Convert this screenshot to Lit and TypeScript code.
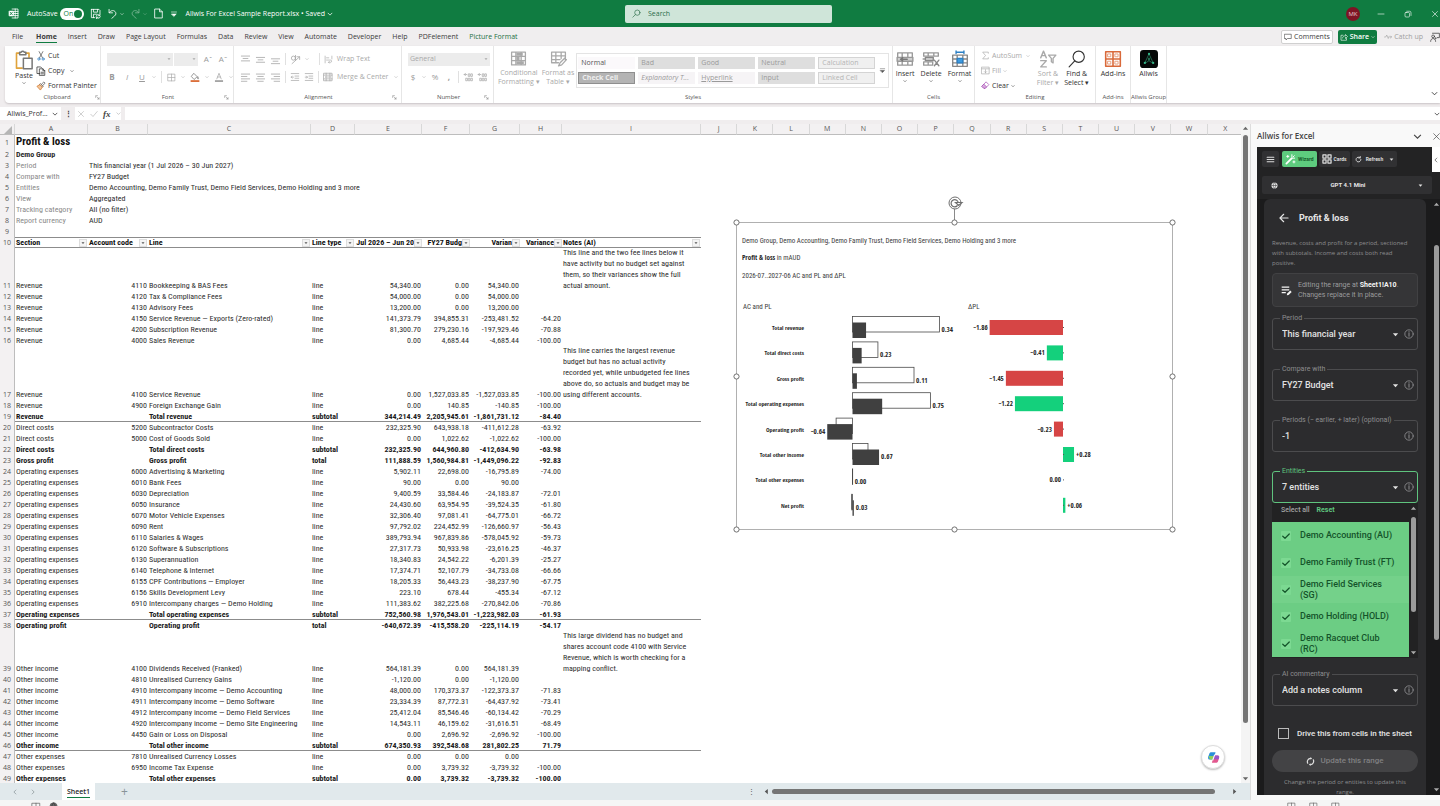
import { LitElement, html, css, svg, nothing } from "lit";
import { customElement, state } from "lit/decorators.js";
import { classMap } from "lit/directives/class-map.js";

const stroke = (body: unknown, size = 12) => html`<svg class="ic" width=${size} height=${size} viewBox="0 0 16 16" fill="none" stroke="currentColor" stroke-width="1.2" stroke-linecap="round" stroke-linejoin="round" aria-hidden="true">${body}</svg>`;
const caret = (size = 5) => html`<svg class="ic" width=${size} height=${size} viewBox="0 0 8 8" aria-hidden="true"><path d="M1 2.5h6L4 6z" fill="currentColor"/></svg>`;
const chev = (size = 6) => html`<svg class="ic" width=${size} height=${size} viewBox="0 0 8 8" fill="none" stroke="currentColor" stroke-width="1" aria-hidden="true"><path d="M1 2.5l3 3 3-3"/></svg>`;

const I = {
  excel: svg`<path d="M6 1.500h8.500v13H6M6 5h8.500M6 8h8.500M6 11h8.500M10.500 1.500v13" /><rect x="1" y="4" width="7.500" height="8" fill="#fff" stroke="none" rx="1"/><path d="M3 6l3.500 4M6.500 6L3 10" stroke="#107c41"/>`,
  save: svg`<path d="M2 2h11l1.500 1.500V8M2 2v12h5M5 2v4h6V2M5 14V9h5"/><path d="M9 12a3 3 0 0 1 5-1.500M14.500 9v2h-2M15 12.500a3 3 0 0 1-5 1.500M9.500 15.500v-2h2"/>`,
  undo: svg`<path d="M3 2v5h5M3.200 6.800C5 4 9 2.500 11.500 5s1.500 5-.5 6.500L7 15"/>`,
  redo: svg`<path d="M13 2v5H8M12.800 6.800C11 4 7 2.500 4.500 5s-1.500 5 .5 6.500L9 15"/>`,
  doc: svg`<path d="M3 1.500h6.500l4 4v9H3zM9.500 1.500v4h4"/>`,
  custom: svg`<path d="M3 4h10"/><path d="M3.500 8h9L8 12.500z" fill="currentColor"/>`,
  search: svg`<circle cx="9.500" cy="6.500" r="4.700"/><path d="M6 10l-4.500 4.500"/>`,
  paste: svg`<path d="M4.500 2.500H2v12h4.500M9.500 2.500H12V6" stroke="#e0a33c" stroke-width="1.300"/><path d="M4.500 3.800h5V1.800H8.200a1.300 1.300 0 0 0-2.400 0H4.500z" stroke="#777"/><path d="M7.500 6.500h7v8.500h-7z" fill="#fff" stroke="#777"/>`,
  cut: svg`<path d="M5 1l5.500 10M11 1L5.500 11" stroke="#555"/><circle cx="4.600" cy="12.800" r="1.800" stroke="#2f7fc4"/><circle cx="11.400" cy="12.800" r="1.800" stroke="#2f7fc4"/>`,
  copy: svg`<path d="M6 12H1.500V1.500h6L9 3"/><path d="M6 4.500h5l3 3V15H6zM11 4.500v3h3M8 10h4M8 12.500h4"/>`,
  painter: svg`<path d="M9 5l3.500-3.500 2 2L11 7" stroke="#555"/><path d="M7.500 4.500l4 4L10 10 6 6z" stroke="#555"/><path d="M6 6L1.500 8.500 7 14.500l3-4.500z" stroke="#d4772a" fill="#f3c79b"/>`,
  border: svg`<path d="M2 2h12v12H2zM8 2v12M2 8h12"/>`,
  fill: svg`<path d="M6.500 2.500l5 5-5 4.500-4-4.500zM12.500 8c1.500 2 1.500 3 .5 3s-1.500-1-.5-3" stroke="#777"/><path d="M1 14.500h14" stroke="#d65b1f" stroke-width="2.600" stroke-linecap="butt"/>`,
  color: svg`<path d="M4.500 11L8 2l3.500 9M5.700 8h4.600"/><path d="M1.500 14.500h13" stroke="#999" stroke-width="2.600" stroke-linecap="butt"/>`,
  alTop: svg`<path d="M2 3h12M4.500 6.500h7M2 10h12"/>`,
  alMid: svg`<path d="M2 5h12M4.500 8.500h7M2 12h12"/>`,
  alBot: svg`<path d="M2 7h12M4.500 10.500h7M2 14h12"/>`,
  alL: svg`<path d="M2 3h12M2 6.500h8M2 10h12M2 13.500h8"/>`,
  alC: svg`<path d="M2 3h12M4 6.500h8M2 10h12M4 13.500h8"/>`,
  alR: svg`<path d="M2 3h12M6 6.500h8M2 10h12M6 13.500h8"/>`,
  orient: svg`<circle cx="5" cy="6" r="3"/><path d="M8 2v7M3 14L14 4M14 8V4h-4"/>`,
  indL: svg`<path d="M2 2.500h12M8 6.500h6M8 10h6M2 13.500h12M5.500 8.200H2M3.500 6.500L2 8.200l1.500 1.700"/>`,
  indR: svg`<path d="M2 2.500h12M8 6.500h6M8 10h6M2 13.500h12M2 8.200h3.500M4 6.500l1.500 1.700L4 9.900"/>`,
  wrap: svg`<path d="M2 2v12M14 2v5M4.500 5h4M4.500 9h7a2 2 0 0 1 0 4H8M9.500 11.500L8 13l1.500 1.500"/>`,
  merge: svg`<path d="M1.500 2h13v12h-13zM1.500 5h13M1.500 11h13M5 2v3M11 2v3M5 11v3M11 11v3M4 8h8M5.500 6.800L4 8l1.500 1.200M10.500 6.800L12 8l-1.500 1.200"/>`,
  launch: svg`<path d="M2 8V2h6M6 6l7 7M13 8v5H8"/>`,
  dec: svg`<path d="M2 4h4M4 2L2 4l2 2M9 3h2v4H9zM13 3h2v4h-2zM5 10h2v4H5zM9 10h2v4H9zM13 10h2v4h-2z"/>`,
  cond: svg`<path d="M1.500 2h13v12h-13zM1.500 6h13M1.500 10h13M5.500 2v12M10.500 2v12"/><path d="M6 2.500h6v3H6zM6 6.500h3v3H6zM6 10.500h7v3H6z" fill="currentColor" stroke="none"/>`,
  ftable: svg`<path d="M1.500 2h13v8M1.500 2v10H8M1.500 5.500h13M1.500 9h8M5.500 2v10M10.500 2v6M14.500 7l-5 5-1.500 3 3-1 4.500-5"/>`,
  insert: svg`<path d="M1.500 2.500h13v11h-13zM5.500 2.500v11M10.500 2.500v11" stroke="#999"/><path d="M1 6.500h14v3.500H1z" fill="#d0d0d0" stroke="#999"/><path d="M4 8.200h6M6 6.800L4 8.200l2 1.500" stroke="#777"/>`,
  del: svg`<path d="M1.500 2.500h13v3h-13zM1.500 10.500h8v3h-8zM5.500 2.500v3M10.500 2.500v3M5.500 10.500v3M1 8h6" stroke="#999"/><path d="M11 9l4 5M15 9l-4 5" stroke="#888"/><path d="M3 6.500h7v3H3z" fill="#c9c9c9" stroke="#888"/>`,
  format: svg`<path d="M1.500 4.500h13v10h-13zM1.500 8h13M1.500 11.500h13M5.500 4.500v10M10.500 4.500v10" stroke="#888"/><path d="M5.500 7.500h5v4h-5z" fill="#3d9be0" stroke="#2b7fc4"/><path d="M4.500 2h7M4.500.8v2.400M11.500.8v2.400" stroke="#2b7fc4"/>`,
  sum: svg`<path d="M13 4V2H3l5 6-5 6h10v-2"/>`,
  fillDown: svg`<path d="M1.500 2h13v12h-13zM1.500 5h13M8 6.500V12M6 10l2 2 2-2"/>`,
  clear: svg`<path d="M9.500 2L14 6.500 7.500 13H5L2 10z" stroke="#a349b0"/><path d="M5.500 6l4.500 4.500L7.500 13H5L2 10z" stroke="#a349b0" fill="#d9a7df"/>`,
  sort: svg`<path d="M1.500 7L4 1l2.500 6M2.300 5h3.400M1.500 9.500h5l-5 5.500h5M8.500 4.500h6.500l-2.500 3v4l-1.500-1v-3z"/>`,
  find: svg`<circle cx="9.500" cy="6" r="5" stroke-width="1"/><path d="M6 9.700L1 15" stroke-width="1"/>`,
  addins: svg`<path d="M1.500 1.500h13v13h-13zM8 1.500v13M1.500 8h13" stroke="#d9693a" stroke-width="1.400"/><path d="M3.500 3.500h2.500v2.500H3.500zM10 3.500h2.500v2.500H10zM3.500 10h2.500v2.500H3.500zM10 10h2.500v2.500H10z" stroke="#e59a78" stroke-width=".8"/>`,
  allwis: svg`<rect width="16" height="16" rx="3" fill="#050807" stroke="none"/><path d="M8 3.500L4.500 11M8 3.500l3.500 7.500M8 7v2.500l-3 2M8 9.500l3 2" stroke="#2a8b68" stroke-width=".6"/><g fill="#35b98a" stroke="none"><circle cx="8" cy="3.500" r="1"/><circle cx="4.300" cy="11.500" r="1"/><circle cx="11.700" cy="11.500" r="1"/><circle cx="8" cy="8" r=".7"/></g>`,
  comment: svg`<path d="M1.500 2.500h13v8.500H7l-3 3v-3H1.500z"/>`,
  share: svg`<path d="M6 4.500H2v10h11V11M5 10c.5-3 3-4.500 6-4.500V3l4 4-4 4V8.500"/>`,
  catchUp: svg`<path d="M1 8h2.500L5.500 4l3 7L10 7l1 1h4M13 6l2 2-2 2"/>`,
  person: svg`<path d="M4 2h11v7h-4l-2.500 2.500V9"/><circle cx="5" cy="7" r="2.200"/><path d="M1 15c0-3 2-4.500 4-4.500S9 12 9 15"/>`,
  x: svg`<path d="M3 3l10 10M13 3L3 13"/>`,
  check: svg`<path d="M1.500 8.500L6 13 14.500 3"/>`,
  tick: svg`<path d="M1.500 8.500L6 12.500 14.500 4" stroke-width="2.400"/>`,
  restore: svg`<rect x="2" y="5" width="9" height="9" rx="2"/><path d="M5.500 2.500H11a3 3 0 0 1 3 3V11"/>`,
  min: svg`<path d="M2 8h12"/>`,
  menu: svg`<path d="M2 4h12M2 8h12M2 12h12" stroke-width="1.800"/>`,
  wand: svg`<path d="M2 14l8-8" stroke-width="2.600"/><path d="M10 1v3M14 6h-3M13.500 2.500L12 4M4 2v3M2.500 3.500h3M13 10v3M11.500 11.500h3" stroke-width="1.400"/>`,
  cards: svg`<path d="M1.500 1.500h5v5h-5zM9.500 1.500h5v5h-5zM1.500 9.500h5v5h-5zM9.500 9.500h5v5h-5z" stroke-width="2"/>`,
  refresh: svg`<path d="M13.500 8A5.500 5.500 0 1 1 11.500 3.800M12 1v3.500H8.500" stroke-width="2"/>`,
  globe: svg`<circle cx="8" cy="8" r="6.500" fill="currentColor"/><path d="M1.500 8h13M8 1.500c-4 4-4 9 0 13M8 1.500c4 4 4 9 0 13" stroke="#2f2f31"/>`,
  back: svg`<path d="M14.500 8h-13M7.500 2l-6 6 6 6" stroke-width="1.800"/>`,
  editNote: svg`<path d="M1 3h11M1 7h11M1 11h6" stroke-width="1.800" stroke-linecap="butt"/><path d="M8.500 15l.5-2.500L13.500 8l2 2-4.500 4.500z" fill="currentColor" stroke="none"/>`,
  info: svg`<circle cx="8" cy="8" r="6.700" stroke-width="1.400"/><path d="M8 7v4.500M8 4.300v.8" stroke-width="1.600"/>`,
  sync: svg`<path d="M3 11A6 6 0 0 1 8 2.500M13 5a6 6 0 0 1-5 8.500" stroke-width="2.200"/><path d="M8 0v5l2.800-2.500zM8 11v5l-2.800-2.500z" fill="currentColor" stroke="none"/>`,
};

type Row = { n: number; k?: "sub" | "tot"; rule?: boolean; note?: string; c: string[] };
const R = (n: number, text: string, opt: Partial<Row> = {}): Row => ({ n, c: text.split("|"), ...opt });
const rows: Row[] = [
  R(11, "Revenue|4110|Bookkeeping & BAS Fees|line|54,340.00|0.00|54,340.00|", { note: "This line and the two fee lines below it\nhave activity but no budget set against\nthem, so their variances show the full\nactual amount." }),
  R(12, "Revenue|4120|Tax & Compliance Fees|line|54,000.00|0.00|54,000.00|"),
  R(13, "Revenue|4130|Advisory Fees|line|13,200.00|0.00|13,200.00|"),
  R(14, "Revenue|4150|Service Revenue — Exports (Zero-rated)|line|141,373.79|394,855.31|-253,481.52|-64.20"),
  R(15, "Revenue|4200|Subscription Revenue|line|81,300.70|279,230.16|-197,929.46|-70.88"),
  R(16, "Revenue|4000|Sales Revenue|line|0.00|4,685.44|-4,685.44|-100.00"),
  R(17, "Revenue|4100|Service Revenue|line|0.00|1,527,033.85|-1,527,033.85|-100.00", { note: "This line carries the largest revenue\nbudget but has no actual activity\nrecorded yet, while unbudgeted fee lines\nabove do, so actuals and budget may be\nusing different accounts." }),
  R(18, "Revenue|4900|Foreign Exchange Gain|line|0.00|140.85|-140.85|-100.00"),
  R(19, "Revenue||Total revenue|subtotal|344,214.49|2,205,945.61|-1,861,731.12|-84.40", { k: "sub", rule: true }),
  R(20, "Direct costs|5200|Subcontractor Costs|line|232,325.90|643,938.18|-411,612.28|-63.92"),
  R(21, "Direct costs|5000|Cost of Goods Sold|line|0.00|1,022.62|-1,022.62|-100.00"),
  R(22, "Direct costs||Total direct costs|subtotal|232,325.90|644,960.80|-412,634.90|-63.98", { k: "sub" }),
  R(23, "Gross profit||Gross profit|total|111,888.59|1,560,984.81|-1,449,096.22|-92.83", { k: "tot" }),
  R(24, "Operating expenses|6000|Advertising & Marketing|line|5,902.11|22,698.00|-16,795.89|-74.00"),
  R(25, "Operating expenses|6010|Bank Fees|line|90.00|0.00|90.00|"),
  R(26, "Operating expenses|6030|Depreciation|line|9,400.59|33,584.46|-24,183.87|-72.01"),
  R(27, "Operating expenses|6050|Insurance|line|24,430.60|63,954.95|-39,524.35|-61.80"),
  R(28, "Operating expenses|6070|Motor Vehicle Expenses|line|32,306.40|97,081.41|-64,775.01|-66.72"),
  R(29, "Operating expenses|6090|Rent|line|97,792.02|224,452.99|-126,660.97|-56.43"),
  R(30, "Operating expenses|6110|Salaries & Wages|line|389,793.94|967,839.86|-578,045.92|-59.73"),
  R(31, "Operating expenses|6120|Software & Subscriptions|line|27,317.73|50,933.98|-23,616.25|-46.37"),
  R(32, "Operating expenses|6130|Superannuation|line|18,340.83|24,542.22|-6,201.39|-25.27"),
  R(33, "Operating expenses|6140|Telephone & Internet|line|17,374.71|52,107.79|-34,733.08|-66.66"),
  R(34, "Operating expenses|6155|CPF Contributions — Employer|line|18,205.33|56,443.23|-38,237.90|-67.75"),
  R(35, "Operating expenses|6156|Skills Development Levy|line|223.10|678.44|-455.34|-67.12"),
  R(36, "Operating expenses|6910|Intercompany charges — Demo Holding|line|111,383.62|382,225.68|-270,842.06|-70.86"),
  R(37, "Operating expenses||Total operating expenses|subtotal|752,560.98|1,976,543.01|-1,223,982.03|-61.93", { k: "sub", rule: true }),
  R(38, "Operating profit||Operating profit|total|-640,672.39|-415,558.20|-225,114.19|-54.17", { k: "tot" }),
  R(39, "Other income|4100|Dividends Received (Franked)|line|564,181.39|0.00|564,181.39|", { note: "This large dividend has no budget and\nshares account code 4100 with Service\nRevenue, which is worth checking for a\nmapping conflict." }),
  R(40, "Other income|4810|Unrealised Currency Gains|line|-1,120.00|0.00|-1,120.00|"),
  R(41, "Other income|4910|Intercompany income — Demo Accounting|line|48,000.00|170,373.37|-122,373.37|-71.83"),
  R(42, "Other income|4911|Intercompany income — Demo Software|line|23,334.39|87,772.31|-64,437.92|-73.41"),
  R(43, "Other income|4912|Intercompany income — Demo Field Services|line|25,412.04|85,546.46|-60,134.42|-70.29"),
  R(44, "Other income|4920|Intercompany income — Demo Site Engineering|line|14,543.11|46,159.62|-31,616.51|-68.49"),
  R(45, "Other income|4450|Gain or Loss on Disposal|line|0.00|2,696.92|-2,696.92|-100.00"),
  R(46, "Other income||Total other income|subtotal|674,350.93|392,548.68|281,802.25|71.79", { k: "sub", rule: true }),
  R(47, "Other expenses|7810|Unrealised Currency Losses|line|0.00|0.00|0.00|"),
  R(48, "Other expenses|6950|Income Tax Expense|line|0.00|3,739.32|-3,739.32|-100.00"),
  R(49, "Other expenses||Total other expenses|subtotal|0.00|3,739.32|-3,739.32|-100.00", { k: "sub" }),
];
const meta = [
  ["Period", "This financial year (1 Jul 2026 – 30 Jun 2027)"],
  ["Compare with", "FY27 Budget"],
  ["Entities", "Demo Accounting, Demo Family Trust, Demo Field Services, Demo Holding and 3 more"],
  ["View", "Aggregated"],
  ["Tracking category", "All (no filter)"],
  ["Report currency", "AUD"],
];
const heads = ["Section", "Account code", "Line", "Line type", "Jul 2026 – Jun 20", "FY27 Budg", "Varian", "Variance", "Notes (AI)"];
const letters = "ABCDEFGHIJKLMNOPQRSTUVWX".split("");

@customElement("pnl-chart")
class PnlChart extends LitElement {
  static styles = css`
    :host { display: block; }
    svg { display: block; overflow: visible; }
    text { font-family: "Roboto Condensed", "Liberation Sans Narrow", Roboto, sans-serif; fill: #3c3c3c; }
    .h { font-size: 7px; }
    .l { font-size: 7px; }
    .n { font-size: 6px; }
    .b { font-family: "Open Sans Condensed", "Roboto Condensed", "Open Sans", sans-serif; font-weight: 700; fill: #262626; }
    .e { text-anchor: end; }
  `;
  data: [string, number, number, number, string, string][] = [
    ["Total revenue", 0.344, 2.206, -1.862, "0.34", "bad"],
    ["Total direct costs", 0.232, 0.645, -0.41, "0.23", "good"],
    ["Gross profit", 0.112, 1.561, -1.45, "0.11", "bad"],
    ["Total operating expenses", 0.753, 1.977, -1.22, "0.75", "good"],
    ["Operating profit", -0.641, -0.416, -0.23, "−0.64", "bad"],
    ["Total other income", 0.674, 0.393, 0.28, "0.67", "good"],
    ["Total other expenses", 0, 0.004, 0, "0.00", "none"],
    ["Net profit", 0.034, -0.027, 0.06, "0.03", "good"],
  ];
  render() {
    const s = 39.4, ax = 116.5, vx = 327;
    return html`<svg width="436" height="307" viewBox="0 0 436 307" role="img" aria-label="Profit and loss chart">
      <text class="h" x="6" y="21">Demo Group, Demo Accounting, Demo Family Trust, Demo Field Services, Demo Holding and 3 more</text>
      <text class="h" x="6" y="38"><tspan class="b">Profit &amp; loss</tspan> in mAUD</text>
      <text class="h" x="6" y="56">2026-07..2027-06 AC and PL and ΔPL</text>
      <text class="l" x="7" y="87">AC and PL</text><text class="l" x="232" y="87">ΔPL</text>
      ${this.data.map(([name, ac, pl, v, t, tone], i) => {
        const y = 94 + i * 25.4;
        const x0 = Math.min(0, pl) * s, x1 = Math.min(0, ac) * s;
        const right = Math.max(0, ac, pl) * s;
        const vt = v === 0 ? "0.00" : (v < 0 ? "−" : "+") + Math.abs(v).toFixed(2);
        return svg`
          <text class="n b e" x="68" y=${y + 14}>${name}</text>
          <rect x=${ax + x0} y=${y + 0.5} width=${Math.abs(pl) * s} height="15.500" fill="#fff" stroke="#4a4a4a" stroke-width=".8"/>
          <rect x=${ax + x1} y=${y + 6.5} width=${Math.abs(ac) * s} height="15.500" fill="#404040"/>
          ${ac < 0 ? svg`<text class="l b e" x=${ax + x1 - 2} y=${y + 16}>${t}</text>` : svg`<text class="l b" x=${ax + right + 2} y=${y + 16}>${t}</text>`}
          <rect x=${v < 0 ? vx + v * s : vx} y=${y + 4} width=${Math.abs(v) * s} height="15" fill=${tone === "bad" ? "#d64545" : "#14d07c"}/>
          <path d=${`M${vx} ${y + 11.5}h1`} stroke="#555" />
          ${v > 0 ? svg`<text class="l b" x=${vx + v * s + 2} y=${y + 14}>${vt}</text>` : svg`<text class="l b e" x=${vx + v * s - 2} y=${y + 14}>${vt}</text>`}`;
      })}
      <rect x=".5" y=".5" width="436" height="307" fill="none" stroke="#b0b0b0" stroke-width="1"/>
      <path d="M218.500-14V0" stroke="#8a8a8a"/>
      <g fill="#fff" stroke="#707070">
        ${[[0, 0], [218, 0], [436, 0], [0, 154], [436, 154], [0, 307], [218, 307], [436, 307]].map(([x, y]) => svg`<circle cx=${x + 0.5} cy=${y + 0.5} r="2.600"/>`)}
        <circle cx="219" cy="-19" r="6"/>
        <path d="M221.500-16.500a3.600 3.600 0 1 1 .8-2.500M219.500-19.500h6.500l-3.300 3z" stroke-width="1.200"/>
      </g>
    </svg>`;
  }
}

@customElement("app-root")
class AppRoot extends LitElement {
  @state() private entities = [
    ["Demo Accounting (AU)", true], ["Demo Family Trust (FT)", true], ["Demo Field Services (SG)", true], ["Demo Holding (HOLD)", true], ["Demo Racquet Club (RC)", true],
  ] as [string, boolean][];

  static styles = css`
    :host { display: block; font-family: "Open Sans", "Noto Sans", sans-serif; font-size: 7px; line-height: 10px; color: #333; }
    * { box-sizing: border-box; }
    button, input, select { font: inherit; color: inherit; background: none; border: 0; padding: 0; margin: 0; appearance: none; border-radius: 0; text-align: inherit; }
    a { color: inherit; text-decoration: none; }
    .ic { display: block; flex: none; }
    .app { height: 100vh; display: flex; flex-direction: column; overflow: hidden; background: #f0edee; }
    .row { display: flex; align-items: center; }

    .title { flex: none; height: 27px; background: #107c41; color: #fff; display: grid; grid-template-columns: minmax(0, 625fr) 207px minmax(0, 608fr); align-items: center; }
    .title .left { display: flex; align-items: center; gap: 6px; padding-left: 8px; white-space: nowrap; }
    .title .left > .row { gap: 2px; }
    .toggle { width: 24px; height: 12px; border-radius: 6px; background: #fff; color: #107c41; display: flex; align-items: center; justify-content: space-between; padding: 0 2px 0 4px; margin-left: -4px; }
    .toggle i { width: 8px; height: 8px; border-radius: 50%; background: #107c41; }
    .auto { margin-left: 2px; }
    .fname { margin-left: 2px; }
    .dim { opacity: .45; }
    .search { height: 18px; background: #cfe5d9; color: #2c6e4b; display: flex; align-items: center; gap: 7px; padding: 0 7px; border-radius: 2px; }
    .search input { flex: 1; min-width: 0; }
    .search input::placeholder { color: #2c6e4b; opacity: 1; }
    .win { display: flex; justify-content: flex-end; align-items: center; gap: 19px; padding-right: 1px; }
    .avatar { width: 14px; height: 14px; border-radius: 50%; background: #7d1424; font-size: 6px; text-align: center; line-height: 14px; color: #e5c9cd; margin-right: -2px; }

    .tabs { flex: none; height: 19px; display: flex; align-items: center; padding: 1px 0 0 12px; gap: 11px; background: #f0eeef; font-size: 7px; color: #3a3a3a; white-space: nowrap; }
    .tabs .on { font-weight: 700; border-bottom: 1px solid #107c41; margin-left: 2px; }
    .tabs a { border-bottom: 1px solid transparent; line-height: 11px; }
    .tabs .green { color: #1d7044; }
    .tabs .right { margin-left: auto; display: flex; align-items: center; gap: 5px; }
    .btn { height: 14px; display: flex; align-items: center; gap: 2px; padding: 0 2px; border-radius: 2px; }
    .comments { background: #fff; border: 1px solid #d0d0d0; }
    .share { background: #107c41; color: #fff; font-weight: 600; }
    .catch { color: #a0a0a0; }

    .ribbon { flex: none; height: 57px; margin-left: 5px; background: #fff; border-radius: 0 0 0 4px; box-shadow: 0 1px 2px #c9c4c6; display: flex; white-space: nowrap; }
    .grp { flex: none; display: flex; flex-direction: column; border-right: 1px solid #e6e6e6; padding: 3px 4px 1px; }
    .grp .body { flex: 1; display: flex; align-items: flex-start; }
    .grp .lab { display: flex; justify-content: center; font-size: 6px; line-height: 10px; color: #555; }
    .grp .lab .ic { margin-left: auto; align-self: center; }
    .grp .lab.corner::before { content: ""; margin-right: auto; width: 5px; }
    .g1 { width: 96px; padding: 3px 0 1px 9px; } .g2 { width: 133px; padding-left: 6px; } .g3 { width: 168px; padding-left: 6px; } .g4 { width: 92px; padding-left: 6px; } .g5 { width: 399px; } .g6 { width: 82px; } .g7 { width: 121px; }
    .g8, .g9 { padding: 3px 0 1px; } .g8 { width: 35px; } .g9 { width: 36px; }
    .g6 .body, .g8 .body, .g9 .body { justify-content: center; }
    .big { display: flex; flex-direction: column; align-items: center; text-align: center; font-size: 7px; line-height: 9px; gap: 1px; padding-top: 1px; flex: none; }
    .off { color: #a9a9a9; }
    .stack { display: flex; flex-direction: column; }
    .stack button, .line { display: flex; align-items: center; gap: 3px; }
    .clip { gap: 2px; padding-left: 2px; }
    .clip button { height: 13px; gap: 2px; }
    .g7 .clip { padding-right: 2px; }
    .on-t { color: #333; }
    .two { display: flex; flex-direction: column; gap: 4px; padding-top: 3px; flex: 1; }
    .two .line { height: 14px; gap: 5px; }
    .drop { height: 13px; background: #ececec; display: flex; align-items: center; justify-content: space-between; padding: 0 2px; color: #a9a9a9; }
    .w1 { width: 66px; } .w2 { width: 24px; margin-left: -4px; } .w3 { width: 82px; }
    .glyph { font-size: 8px; width: 10px; text-align: center; color: #9a9a9a; }
    .two .al { gap: 4px; }
    .vr { width: 1px; height: 12px; background: #e0e0e0; }
    .gallery { display: grid; grid-template-columns: repeat(5, 57px) 9px; grid-template-rows: 12px 12px; gap: 3px; border: 1px solid #e4e4e4; padding: 3px 1px; margin-top: 4px; }
    .gallery button { padding-left: 3px; line-height: 12px; color: #9a9a9a; background: #dedede; }
    .gallery .n { background: #fbf9fb; color: #555; }
    .gallery .c { background: #b4b4b4; color: #eee; border: 1px solid #8f8f8f; line-height: 10px; font-weight: 700; }
    .gallery .p { background: #f6f4f6; }
    .gallery .o { border: 1px solid #d4d4d4; background: #f0f0f0; line-height: 10px; color: #b4b4b4; }
    .gallery .more { grid-column: 6; grid-row: 1 / 3; background: none; justify-self: center; padding: 0; color: #555; }
    .gap { gap: 5px; }
    .g6 .gap { gap: 6px; }
    .g5 .gap { gap: 2px; }
    .fold { margin: auto 2px 6px auto; }

    .fbar { flex: none; display: flex; align-items: center; height: 13px; margin: 4px 0; }
    .fbar .name { width: 61px; height: 13px; background: #fff; padding: 0 3px 0 7px; display: flex; align-items: center; justify-content: space-between; }
    .fbar .ops { background: #fff; height: 13px; display: flex; align-items: center; gap: 5px; padding: 0 2px; margin: 0 4px 0 0; color: #b0b0b0; width: 46px; }
    .fbar .dots { width: 14px; text-align: center; font-weight: 700; }
    .fx { font: italic 700 9px "Liberation Serif", serif; color: #444; }
    .fbar .formula { flex: 1; min-width: 0; height: 13px; background: #fff; display: flex; align-items: center; }
    .fbar .formula input { flex: 1; min-width: 0; }

    .main { flex: 1; min-height: 0; display: grid; grid-template-columns: minmax(0, 1fr) 190px; }
    .book { min-width: 0; min-height: 0; display: flex; flex-direction: column; }
    .view { flex: 1; min-height: 0; display: grid; grid-template-columns: minmax(0, 1fr) 9px; }
    .sheet { position: relative; overflow: hidden; background: #fff; }
    table { table-layout: fixed; border-collapse: separate; border-spacing: 0; width: calc(100% + 3px); font-family: "Roboto Condensed", "Liberation Sans Narrow", Roboto, sans-serif; font-size: 8px; line-height: 11px; color: #2e2e2e; }
    td, th { padding: 0 1px; font-weight: inherit; vertical-align: bottom; text-align: left; white-space: nowrap; height: 11px; }
    thead th { background: #f3f1f2; text-align: center; border-right: 1px solid #d8d8d8; border-bottom: 1px solid #bdbdbd; color: #555; line-height: 10px; font-family: "Open Sans", sans-serif; font-size: 7px; }
    tbody th { background: #f3f1f2; text-align: center; border-right: 1px solid #bdbdbd; color: #555; padding: 0; font-family: "Open Sans", sans-serif; font-size: 7px; }
    .corner-tri { display: block; margin: 0 1px 0 auto; }
    .c0 { width: 15px; } .cA { width: 73px; } .cB { width: 60px; } .cC { width: 163px; } .cD { width: 44px; } .cE { width: 67px; } .cF { width: 48px; } .cG { width: 50px; } .cH { width: 42px; } .cI { width: 139px; }
    .r { text-align: right; }
    .bold td { font-weight: 700; color: #1c1c1c; }
    .rule td.in { box-shadow: inset 0 -1px #8c8c8c; }
    .t1 td, .t1 th { height: 14px; vertical-align: middle; }
    .t1 td { font-size: 11px; font-weight: 700; color: #111; line-height: 14px; }
    .t2 td { font-weight: 700; }
    .lbl { color: #8a8a8a; }
    .hd td.in { font-weight: 700; color: #111; border-top: 1px solid #8c8c8c; border-bottom: 1px solid #8c8c8c; line-height: 9px; vertical-align: middle; }
    .hd td.num { padding: 0; }
    .hc { display: flex; align-items: center; justify-content: space-between; gap: 1px; }
    .num .hc { justify-content: flex-end; gap: 0; }
    .hc button { flex: none; width: 8px; height: 8px; background: #f4f4f4; border: 1px solid #ddd; display: grid; place-items: center; color: #555; }
    .note { white-space: pre; margin-top: -1px; }
    .chart { position: absolute; left: 736px; top: 98px; }
    .copilot { position: absolute; right: 16px; bottom: 14px; width: 24px; height: 24px; border-radius: 50%; background: #fff; border: 1px solid #ddd; box-shadow: 0 1px 2px #bbb; display: grid; place-items: center; }
    .vs { background: #f4f4f4; display: flex; flex-direction: column; align-items: center; justify-content: space-between; padding: 1px 0; color: #666; }
    .vs i { width: 5px; flex: 0 1 588px; background: #757575; border-radius: 3px; margin-bottom: auto; margin-top: 3px; }
    .up { transform: rotate(180deg); }
    .lf { transform: rotate(90deg); }
    .rt { transform: rotate(-90deg); }
    .sbar { flex: none; height: 17px; background: #e1e9ec; display: flex; align-items: center; padding-left: 12px; color: #8a9498; }
    .sbar .nav { display: flex; gap: 12px; }
    .sbar .tab { margin-left: 26px; background: #fff; height: 17px; width: 33px; display: grid; place-items: center; }
    .sbar .tab span { border-bottom: 1px solid #107c41; font-weight: 600; color: #2a2a2a; font-size: 7px; line-height: 11px; }
    .sbar .plus { margin-left: 26px; font-size: 12px; }
    .hs { margin-left: auto; width: 502px; display: flex; align-items: center; gap: 2px; padding-right: 12px; color: #555; }
    .hs i { flex: 0 1 443px; height: 5px; border-radius: 3px; background: #757575; margin-right: auto; }
    .hs .grip { margin-right: 6px; }

    .pane { min-width: 0; min-height: 0; background: #f9f9f9; border-left: 1px solid #ddd; padding: 1px 0 5px 6px; display: flex; flex-direction: column; }
    .phead { flex: none; height: 22px; display: flex; align-items: center; font-size: 8px; font-weight: 600; color: #444; }
    .phead .row { margin-left: auto; gap: 10px; margin-right: -1px; }
    .dark { flex: 1; min-height: 0; background: #232324; color: #e6e6e6; font-family: Roboto, sans-serif; display: flex; flex-direction: column; overflow: hidden; }
    .tools { flex: none; display: flex; gap: 2px; padding: 4px 0 0 5px; height: 24px; }
    .tools button { height: 16px; background: #313133; border-radius: 2px; display: flex; align-items: center; gap: 2px; padding: 0 3px; font-size: 5px; font-weight: 700; color: #ddd; }
    .tools .ham { padding: 0 4px; }
    .tools .wiz { background: #5ecb7e; color: #175c2c; margin-left: 1px; }
    .tools .wiz .ic { color: #fff; }
    .tools .ref { gap: 4px; }
    .tools .ref .ic:last-child { margin-left: 2px; }
    .tools .side { margin: -4px 0 0 auto; height: 25px; width: 8px; background: #fff; color: #555; padding: 0 1px; border-radius: 0; }
    .model { flex: none; height: 18px; margin: 5px 8px 5px 5px; background: #303032; display: flex; align-items: center; padding: 0 9px; border-radius: 2px; font-size: 6px; font-weight: 700; }
    .model select { flex: 1; text-align: center; text-align-last: center; }
    .scroll { flex: 1; min-height: 0; display: grid; grid-template-columns: minmax(0, 1fr) 8px; gap: 6px; background: #1b1b1c; padding-left: 7px; }
    .card { background: #2c2c2e; border-radius: 6px 6px 0 0; padding: 9px 8px 0; overflow: hidden; }
    .chead { display: flex; align-items: center; gap: 10px; padding-left: 7px; height: 20px; font-size: 9px; font-weight: 700; }
    .desc { margin: 10px 0 5px; padding-right: 6px; font-size: 6px; line-height: 10px; color: #8c8c8e; font-family: "Open Sans", sans-serif; }
    .alert { height: 34px; display: flex; align-items: center; gap: 6px; padding-left: 8px; background: #353537; border: 1px solid #414143; border-radius: 4px; font-size: 7px; color: #9c9c9e; }
    .alert b, .alert .ic { color: #f4f4f4; }
    fieldset { margin: 8px 0 16px; padding: 0 3px 0 7px; min-width: 0; border: 1px solid #4c4c4e; border-radius: 3px; height: 35px; }
    fieldset + fieldset { margin-top: 7px; }
    legend { padding: 0 2px; font-size: 7px; line-height: 7px; color: #8c8c8e; }
    .field { display: flex; align-items: center; gap: 5px; padding-left: 2px; height: 24px; font-size: 9px; font-weight: 500; color: #e2e2e2; }
    .field select, .field input, .field .sel { flex: 1; min-width: 0; }
    .field .info { color: #8c8c8e; }
    fieldset.act { border-color: #5fc47e; margin-bottom: 0; }
    .act legend { color: #5fc47e; }
    .menu { display: grid; grid-template-columns: minmax(0, 1fr) 9px; background: #222223; height: 155px; margin-bottom: 13px; }
    .mt { height: 19px; display: flex; align-items: flex-start; gap: 7px; padding: 2px 0 0 9px; font-size: 7px; font-weight: 500; color: #a4a4a4; }
    .mt .rs { color: #5fc47e; font-weight: 700; }
    .opt { height: 27px; display: grid; grid-template-columns: 10px 1fr; gap: 9px; align-items: center; padding: 0 12px 0 9px; background: #6ccd84; color: #14542a; font-size: 9px; line-height: 11px; font-weight: 500; }
    .opt:nth-of-type(3) { background: #74d18a; }
    .box { width: 10px; height: 10px; display: grid; place-items: center; background: #7cd992; border-radius: 1px; }
    .box input, .drive input { grid-area: 1 / 1; width: 100%; height: 100%; }
    .box .ic { grid-area: 1 / 1; pointer-events: none; }
    .sb { display: flex; flex-direction: column; align-items: center; color: #aaa; padding: 2px 0; }
    .sb i { width: 5px; background: #9b9b9b; border-radius: 3px; }
    .sb .last { margin-top: auto; }
    .menu .sb i { height: 95px; margin-top: 5px; }
    .drive { display: flex; align-items: center; gap: 8px; padding-left: 6px; height: 11px; font-size: 8px; font-weight: 500; margin-top: 22px; }
    .drive .cb { width: 11px; height: 11px; border: 1px solid #bbb; display: grid; }
    .upd { width: 100%; height: 22px; margin-top: 11px; border-radius: 11px; background: #434345; color: #808082; display: flex; align-items: center; justify-content: center; gap: 5px; font-size: 8px; font-weight: 500; }
    .upd .ic { color: #ddd; }
    .foot { margin: 5px 0 0; padding: 0 5px; text-align: center; font-size: 6px; line-height: 10px; color: #8c8c8e; font-family: "Open Sans", sans-serif; }
    .scroll > .sb i { height: 395px; margin-top: 37px; }

    .status { flex: none; height: 6px; overflow: hidden; background: #f5f5f5; display: flex; align-items: flex-start; gap: 8px; padding: 2px 0 0 31px; color: #666; }
    .status .views { margin-left: auto; margin-right: 100px; display: flex; gap: 13px; }
  `;

  private toggleEntity(i: number) {
    this.entities = this.entities.map((e, k) => (k === i ? [e[0], !e[1]] : e)) as [string, boolean][];
  }

  private info = html`<span class="info">${stroke(I.info, 10)}</span>`;

  private select(id: string, label: string, value: string) {
    return html`<fieldset><legend><label for=${id}>${label}</label></legend>
      <div class="field"><select id=${id}><option>${value}</option></select>${caret(7)}${this.info}</div></fieldset>`;
  }

  private dataRow(r: Row) {
    return html`<tr class=${classMap({ bold: !!r.k, rule: !!r.rule })}><th>${r.n}</th>
      ${r.c.map((t, i) => html`<td class=${"in" + (i === 1 || i > 3 ? " r" : "")}>${t}</td>`)}
      <td class="in">${r.note ? html`<div class="note">${r.note}</div>` : nothing}</td></tr>`;
  }

  render() {
    return html`<div class="app">
      <header class="title">
        <div class="left">
          ${stroke(I.excel, 11)}<span class="auto">AutoSave</span>
          <button class="toggle" role="switch" aria-checked="true">On<i></i></button>
          ${stroke(I.save, 11)}
          <span class="row">${stroke(I.undo, 11)}${chev(4)}</span>
          <span class="row dim">${stroke(I.redo, 11)}${chev(4)}</span>
          ${stroke(I.doc, 11)}${stroke(I.custom, 8)}
          <span class="row fname"><span>Allwis For Excel Sample Report.xlsx • Saved</span>${chev(6)}</span>
        </div>
        <label class="search">${stroke(I.search, 9)}<input placeholder="Search" aria-label="Search"></label>
        <div class="win"><span class="avatar">MK</span><button aria-label="Minimize">${stroke(I.min, 8)}</button><button aria-label="Restore">${stroke(I.restore, 8)}</button><button aria-label="Close">${stroke(I.x, 8)}</button></div>
      </header>
      <nav class="tabs">
        ${["File", "Home", "Insert", "Draw", "Page Layout", "Formulas", "Data", "Review", "View", "Automate", "Developer", "Help", "PDFelement", "Picture Format"].map((t) => html`<a href="#" class=${t === "Home" ? "on" : t === "Picture Format" ? "green" : ""}>${t}</a>`)}
        <div class="right"><button class="btn comments">${stroke(I.comment, 8)}Comments</button><button class="btn share">${stroke(I.share, 8)}Share${chev(4)}</button><button class="btn catch">${stroke(I.catchUp, 8)}Catch up</button>${stroke(I.person, 10)}</div>
      </nav>
      <section class="ribbon">
        <div class="grp g1"><div class="body"><button class="big">${stroke(I.paste, 20)}Paste${chev(4)}</button>
          <div class="stack clip"><button>${stroke(I.cut, 10)}Cut</button><button>${stroke(I.copy, 10)}Copy&nbsp;&nbsp;${chev(4)}</button><button>${stroke(I.painter, 10)}Format Painter</button></div></div>
          <div class="lab corner">Clipboard${stroke(I.launch, 5)}</div></div>
        <div class="grp g2"><div class="body"><div class="two off">
          <div class="line"><span class="drop w1"><i></i>${caret(4)}</span><span class="drop w2"><i></i>${caret(4)}</span><span class="glyph">Aˆ</span><span class="glyph">Aˇ</span></div>
          <div class="line"><b class="glyph">B</b><i class="glyph">I</i><u class="glyph">U</u>${chev(4)}<span class="vr"></span>${stroke(I.border, 9)}${chev(4)}${stroke(I.fill, 10)}${chev(4)}${stroke(I.color, 10)}${chev(4)}</div></div></div>
          <div class="lab corner">Font${stroke(I.launch, 5)}</div></div>
        <div class="grp g3"><div class="body"><div class="two off">
          <div class="line al">${stroke(I.alTop, 11)}${stroke(I.alMid, 11)}${stroke(I.alBot, 11)}<span class="vr"></span>${stroke(I.orient, 11)}${chev(4)}&nbsp;<span class="vr"></span>${stroke(I.wrap, 9)}Wrap Text</div>
          <div class="line al">${stroke(I.alL, 11)}${stroke(I.alC, 11)}${stroke(I.alR, 11)}<span class="vr"></span>${stroke(I.indL, 10)}${stroke(I.indR, 10)}<span class="vr"></span>${stroke(I.merge, 10)}Merge &amp; Center&nbsp;${chev(4)}</div></div></div>
          <div class="lab corner">Alignment${stroke(I.launch, 5)}</div></div>
        <div class="grp g4"><div class="body"><div class="two off">
          <div class="line"><span class="drop w3">General${caret(4)}</span></div>
          <div class="line al"><span class="glyph">$</span>${chev(4)}<span class="glyph">%</span><b class="glyph">,</b><span class="vr"></span>${stroke(I.dec, 10)}${stroke(I.dec, 10)}</div></div></div>
          <div class="lab corner">Number${stroke(I.launch, 5)}</div></div>
        <div class="grp g5"><div class="body gap"><button class="big off">${stroke(I.cond, 17)}<span>Conditional<br>Formatting ▾</span></button><button class="big off">${stroke(I.ftable, 17)}<span>Format as<br>Table ▾</span></button>
          <div class="gallery"><button class="n">Normal</button><button>Bad</button><button>Good</button><button>Neutral</button><button class="o">Calculation</button><button class="c">Check Cell</button><button class="p"><i>Explanatory T...</i></button><button class="p"><u>Hyperlink</u></button><button>Input</button><button class="o">Linked Cell</button><button class="more" aria-label="More">${stroke(I.custom, 7)}</button></div></div>
          <div class="lab">Styles</div></div>
        <div class="grp g6"><div class="body gap"><button class="big">${stroke(I.insert, 18)}Insert${chev(4)}</button><button class="big">${stroke(I.del, 18)}Delete${chev(4)}</button><button class="big">${stroke(I.format, 18)}Format${chev(4)}</button></div><div class="lab">Cells</div></div>
        <div class="grp g7"><div class="body gap"><div class="stack clip off"><button>${stroke(I.sum, 9)}AutoSum&nbsp;${chev(4)}</button><button>${stroke(I.fillDown, 9)}Fill${chev(4)}</button><button class="on-t">${stroke(I.clear, 9)}Clear${chev(4)}</button></div>
          <button class="big off">${stroke(I.sort, 18)}<span>Sort &amp;<br>Filter ▾</span></button><button class="big">${stroke(I.find, 18)}<span>Find &amp;<br>Select ▾</span></button></div><div class="lab">Editing</div></div>
        <div class="grp g8"><div class="body"><button class="big">${stroke(I.addins, 18)}Add-ins</button></div><div class="lab">Add-ins</div></div>
        <div class="grp g9"><div class="body"><button class="big">${stroke(I.allwis, 18)}Allwis</button></div><div class="lab">Allwis Group</div></div>
        <span class="fold">${chev(7)}</span>
      </section>
      <div class="fbar"><span class="name">Allwis_Prof...${chev(6)}</span><span class="dots">⋮</span><span class="ops">${stroke(I.x, 8)}${stroke(I.check, 8)}<span class="fx">fx</span>${chev(5)}</span><span class="formula"><input aria-label="Formula">${chev(6)}</span></div>
      <main class="main">
        <section class="book">
          <div class="view">
            <div class="sheet">
              <table>
                <colgroup><col class="c0">${letters.map((l) => html`<col class=${"c" + l}>`)}</colgroup>
                <thead><tr><th><svg class="corner-tri" width="8" height="8" viewBox="0 0 8 8"><path d="M8 0v8H0z" fill="#b5b5b5"/></svg></th>${letters.map((l) => html`<th>${l}</th>`)}</tr></thead>
                <tbody>
                  <tr class="t1"><th>1</th><td colspan="3">Profit &amp; loss</td></tr>
                  <tr class="t2"><th>2</th><td colspan="3">Demo Group</td></tr>
                  ${meta.map(([a, b], i) => html`<tr><th>${i + 3}</th><td class="lbl">${a}</td><td colspan="6">${b}</td></tr>`)}
                  <tr><th>9</th><td></td></tr>
                  <tr class="hd"><th>10</th>${heads.map((h, i) => html`<td class="in ${i > 3 && i < 8 ? "num" : ""}"><div class="hc"><span>${h}</span><button aria-label="Filter ${h}">${caret(4)}</button></div></td>`)}</tr>
                  ${rows.map((r) => this.dataRow(r))}
                </tbody>
              </table>
              <pnl-chart class="chart"></pnl-chart>
              <button class="copilot" aria-label="Copilot"><svg width="13" height="13" viewBox="0 0 16 16"><path d="M5 1.500h5.500L8 10.500H3.500C1.500 10.500 1 9 1.500 7L3 3c.4-1 1-1.500 2-1.500z" fill="#2a8fd8"/><path d="M2 6l1.500 4.500H8L9 6z" fill="#8ccf5a"/><path d="M11 14.500H6L8.500 5.500H13c2 0 2.300 1.500 1.800 3L13.500 13c-.4 1-1.300 1.500-2.500 1.500z" fill="#e2588f"/><path d="M8.500 5.500H13c2 0 2.300 1.500 1.800 3l-.4 1.500H7.200z" fill="#9a56c8"/><path d="M9.500 4.500L7 11.500" stroke="#fff" stroke-width="1.400"/></svg></button>
            </div>
            <div class="vs"><span class="up">${caret(7)}</span><i></i>${caret(7)}</div>
          </div>
          <div class="sbar"><span class="nav"><span class="lf">${chev(6)}</span><span class="rt">${chev(6)}</span></span><a href="#" class="tab"><span>Sheet1</span></a><button class="plus" aria-label="New sheet">+</button>
            <div class="hs"><span class="grip">⋮</span><span class="lf">${caret(7)}</span><i></i><span class="rt">${caret(7)}</span></div></div>
        </section>
        <aside class="pane">
          <div class="phead">Allwis for Excel<span class="row">${chev(9)}${stroke(I.x, 9)}</span></div>
          <div class="dark">
            <div class="tools"><button class="ham" aria-label="Menu">${stroke(I.menu, 9)}</button><button class="wiz">${stroke(I.wand, 11)}Wizard</button><button>${stroke(I.cards, 10)}Cards</button><button class="ref">${stroke(I.refresh, 7)}Refresh${caret(5)}</button><button class="side" aria-label="Collapse"><span class="lf">${chev(6)}</span></button></div>
            <div class="model">${stroke(I.globe, 7)}<select aria-label="Model"><option>GPT 4.1 Mini</option></select>${caret(5)}</div>
            <div class="scroll">
              <div class="card">
                <div class="chead"><button aria-label="Back">${stroke(I.back, 10)}</button><span>Profit &amp; loss</span></div>
                <p class="desc">Revenue, costs and profit for a period, sectioned with subtotals. Income and costs both read positive.</p>
                <div class="alert">${stroke(I.editNote, 11)}<span>Editing the range at <b>Sheet1!A10</b>.<br>Changes replace it in place.</span></div>
                ${this.select("period", "Period", "This financial year")}
                ${this.select("compare", "Compare with", "FY27 Budget")}
                <fieldset><legend><label for="periods">Periods (− earlier, + later) (optional)</label></legend><div class="field"><input id="periods" .value=${"-1"}>${this.info}</div></fieldset>
                <fieldset class="act"><legend><label for="ents">Entities</label></legend><div class="field"><button id="ents" class="sel" aria-expanded="true">7 entities</button>${caret(7)}${this.info}</div></fieldset>
                <div class="menu"><div><div class="mt"><button>Select all</button><button class="rs">Reset</button></div>
                  ${this.entities.map(([n, on], i) => html`<label class="opt"><span class="box"><input type="checkbox" .checked=${on} @change=${() => this.toggleEntity(i)}>${on ? stroke(I.tick, 8) : nothing}</span><span>${n}</span></label>`)}</div>
                  <div class="sb"><span class="up">${caret(7)}</span><i></i><span class="last">${caret(7)}</span></div></div>
                ${this.select("ai", "AI commentary", "Add a notes column")}
                <label class="drive"><span class="cb"><input type="checkbox"></span>Drive this from cells in the sheet</label>
                <button class="upd">${stroke(I.sync, 9)}Update this range</button>
                <p class="foot">Change the period or entities to update this range.</p>
              </div>
              <div class="sb"><span class="up">${caret(7)}</span><i></i><span class="last">${caret(7)}</span></div>
            </div>
          </div>
        </aside>
      </main>
      <footer class="status">${stroke(I.border, 10)}${stroke(I.globe, 9)}<span class="views">${stroke(I.border, 9)}${stroke(I.border, 9)}${stroke(I.border, 9)}</span></footer>
    </div>`;
  }
}
